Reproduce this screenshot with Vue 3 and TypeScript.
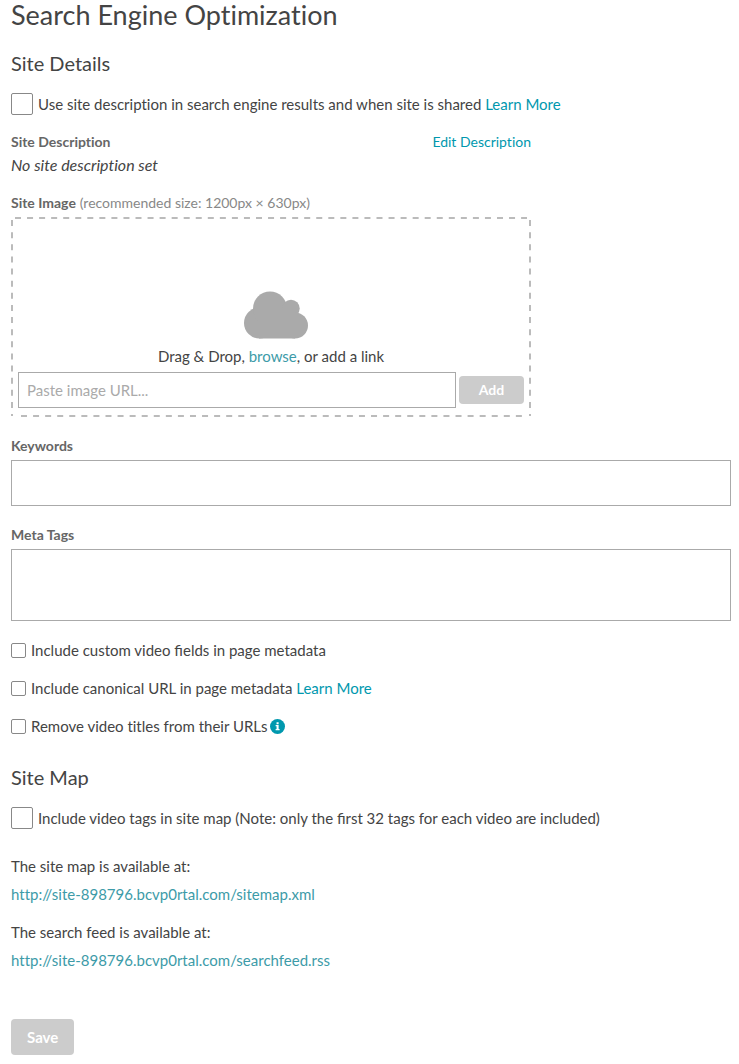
<script setup lang="ts">
import { ref } from 'vue'

interface MetadataOption {
  id: string
  label: string
  link?: boolean
  info?: boolean
}

const useDescription = ref(false)
const includeTags = ref(false)
const imageUrl = ref('')
const keywords = ref('')
const metaTags = ref('')
const selected = ref<string[]>([])

const options: MetadataOption[] = [
  { id: 'custom-fields', label: 'Include custom video fields in page metadata' },
  { id: 'canonical', label: 'Include canonical URL in page metadata', link: true },
  { id: 'remove-titles', label: 'Remove video titles from their URLs', info: true },
]

const feeds = [
  { text: 'The site map is available at:', url: 'http://site-898796.bcvp0rtal.com/sitemap.xml' },
  { text: 'The search feed is available at:', url: 'http://site-898796.bcvp0rtal.com/searchfeed.rss' },
]
</script>

<template>
  <main class="page">
    <h1>Search Engine Optimization</h1>

    <section>
      <h2>Site Details</h2>
      <div class="check-row large">
        <input id="use-description" v-model="useDescription" type="checkbox" />
        <span><label for="use-description">Use site description in search engine results and when site is shared</label> <a href="#">Learn More</a></span>
      </div>

      <div class="narrow">
        <div class="label-row">
          <span class="field-label">Site Description</span>
          <a class="edit" href="#">Edit Description</a>
        </div>
        <p class="empty">No site description set</p>

        <div class="label-row">
          <span><label class="field-label" for="image-url">Site Image</label> <span class="hint">(recommended size: 1200px × 630px)</span></span>
        </div>
        <div class="dropzone">
          <svg class="dashes" aria-hidden="true">
            <line x1="0" y1="0" x2="100%" y2="0" stroke-dasharray="6 6.05" />
            <line x1="0" y1="100%" x2="100%" y2="100%" stroke-dasharray="6 6.07" stroke-dashoffset="-6" />
            <line x1="0" y1="0" x2="0" y2="100%" transform="translate(-3 0)" stroke-dasharray="6 6.13" stroke-dashoffset="-2" />
            <line x1="100%" y1="0" x2="100%" y2="100%" transform="translate(3 0)" stroke-dasharray="6 6.13" stroke-dashoffset="-2" />
          </svg>
          <svg class="cloud" viewBox="-10 0 74 48" aria-hidden="true">
            <circle cx="15.5" cy="32" r="15.5" />
            <circle cx="26" cy="17.5" r="17" />
            <circle cx="47" cy="17.5" r="8.7" />
            <circle cx="51" cy="34.5" r="13" />
            <rect x="15" y="17" width="36" height="30.5" />
          </svg>
          <p class="drop-text">Drag &amp; Drop, <a class="soft" href="#">browse</a>, or add a link</p>
          <div class="url-row">
            <input id="image-url" v-model="imageUrl" type="text" placeholder="Paste image URL..." />
            <button class="add" type="button">Add</button>
          </div>
        </div>
      </div>

      <div class="field">
        <label class="field-label" for="keywords">Keywords</label>
        <textarea id="keywords" v-model="keywords" class="keywords"></textarea>
      </div>
      <div class="field">
        <label class="field-label" for="meta-tags">Meta Tags</label>
        <textarea id="meta-tags" v-model="metaTags" class="meta-tags"></textarea>
      </div>

      <div class="options">
        <div v-for="option in options" :key="option.id" class="check-row">
          <input :id="option.id" v-model="selected" type="checkbox" :value="option.id" />
          <span><label :for="option.id" :class="{ ligatures: !option.info }">{{ option.label }}</label>{{ ' ' }}<a v-if="option.link" href="#">Learn More</a></span>
          <svg v-if="option.info" class="info" viewBox="0 0 16 16" aria-hidden="true">
            <circle cx="8" cy="8" r="8" />
            <path d="M7 3.5h2.2v2H7zM6 6.5h3.2v4.2h1v1.3H6v-1.3h1V7.8H6z" />
          </svg>
        </div>
      </div>
    </section>

    <section class="site-map">
      <h2>Site Map</h2>
      <div class="check-row large">
        <input id="include-tags" v-model="includeTags" type="checkbox" />
        <label class="ligatures" for="include-tags">Include video tags in site map (Note: only the first 32 tags for each video are included)</label>
      </div>
      <div class="feeds">
        <div v-for="feed in feeds" :key="feed.url" class="feed">
          <p>{{ feed.text }}</p>
          <a class="soft" :href="feed.url">{{ feed.url }}</a>
        </div>
      </div>
    </section>

    <button class="save" type="button">Save</button>
  </main>
</template>

<style>
body {
  margin: 0;
  background: #fff;
}
</style>

<style scoped>
.page {
  padding: 0 8px 8px 11px;
  color: #444;
  font: 15px/20px Lato, sans-serif;
  font-variant-ligatures: none;
}

.ligatures {
  font-variant-ligatures: normal;
}

h1,
h2,
p {
  margin: 0;
  font-weight: 400;
}

h1 {
  font-size: 27px;
  line-height: 30px;
}

h2 {
  margin-top: 21px;
  font-size: 20px;
  line-height: 24px;
}

a {
  color: #0098ae;
  text-decoration: none;
}

.soft {
  color: #3d9ba8;
}

input,
textarea,
button {
  box-sizing: border-box;
  margin: 0;
  font: inherit;
}

.check-row {
  display: flex;
  align-items: center;
  gap: 5px;
}

.check-row input {
  appearance: none;
  flex: none;
  width: 15px;
  height: 15px;
  border: 1px solid #888;
  border-radius: 2px;
  background: #fff;
}

.check-row input:checked {
  background: #0098ae;
}

.large {
  margin-top: 18px;
}

.large input {
  width: 22px;
  height: 22px;
}

.narrow {
  max-width: 520px;
}

.label-row {
  display: flex;
  justify-content: space-between;
  margin-top: 17px;
}

.field-label {
  color: #666;
  font-size: 14px;
  font-weight: 700;
}

.edit,
.hint {
  font-size: 14px;
}

.hint {
  color: #888;
}

.empty {
  margin-top: 3px;
  font-size: 16px;
  font-style: italic;
}

.dropzone {
  position: relative;
  display: flex;
  flex-direction: column;
  align-items: center;
  margin-top: 4px;
  padding: 74px 7px 9px;
}

.dashes {
  position: absolute;
  top: 1px;
  left: 4px;
  width: calc(100% - 8px);
  height: calc(100% - 2px);
  overflow: visible;
  pointer-events: none;
  stroke: #bbb;
  stroke-width: 2px;
}

.cloud {
  width: 74px;
  height: 48px;
  fill: #aaa;
}

.drop-text {
  margin-top: 7px;
}

.url-row {
  display: flex;
  align-items: center;
  align-self: stretch;
  gap: 3px;
  margin-top: 6px;
}

.url-row input {
  flex: 1;
  min-width: 0;
  height: 36px;
  padding: 0 8px;
  border: 1px solid #aaa;
  color: #444;
}

.url-row input::placeholder {
  color: #aaa;
  opacity: 1;
}

button {
  border: 0;
  border-radius: 4px;
  background: #ccc;
  color: #fff;
  font-weight: 700;
}

.add {
  width: 65px;
  height: 28px;
  padding: 0;
  font-size: 14px;
}

.field {
  display: flex;
  flex-direction: column;
  gap: 4px;
  margin-top: 19px;
}

textarea {
  display: block;
  width: 100%;
  padding: 8px;
  border: 1px solid #aaa;
  border-radius: 0;
  resize: none;
}

.keywords {
  height: 46px;
}

.meta-tags {
  height: 72px;
}

.options {
  display: flex;
  flex-direction: column;
  gap: 18px;
  margin-top: 19px;
}

.info {
  width: 15px;
  height: 15px;
  margin-left: -2px;
  fill: #0098ae;
}

.info path {
  fill: #fff;
}

.site-map {
  margin-top: 29px;
}

.feeds {
  display: flex;
  flex-direction: column;
  gap: 18px;
  margin-top: 27px;
}

.feed {
  display: flex;
  flex-direction: column;
  align-items: flex-start;
  gap: 8px;
}

.save {
  display: block;
  height: 36px;
  margin-top: 49px;
  padding: 0 16px;
}
</style>
